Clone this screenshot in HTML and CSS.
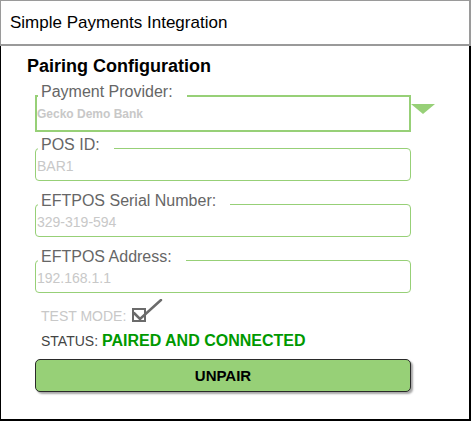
FILE: index.html
```html
<!DOCTYPE html>
<html lang="en">
<head>
<meta charset="utf-8">
<title>Simple Payments Integration</title>
<link rel="stylesheet" href="styles.css">
</head>
<body>
<div class="app">
  <header class="titlebar">Simple Payments Integration</header>
  <main class="panel">
    <h1 class="heading">Pairing Configuration</h1>
    <form class="form">
      <div class="select-row">
        <fieldset class="field field--select">
          <legend class="field-label">Payment Provider:</legend>
          <div class="field-value field-value--bold">Gecko Demo Bank</div>
        </fieldset>
        <span class="select-arrow"></span>
      </div>
      <fieldset class="field">
        <legend class="field-label">POS ID:</legend>
        <div class="field-value">BAR1</div>
      </fieldset>
      <fieldset class="field">
        <legend class="field-label">EFTPOS Serial Number:</legend>
        <div class="field-value">329-319-594</div>
      </fieldset>
      <fieldset class="field">
        <legend class="field-label">EFTPOS Address:</legend>
        <div class="field-value">192.168.1.1</div>
      </fieldset>
      <div class="test-row">
        <span class="test-label">TEST MODE:</span>
        <svg class="checkbox" width="32" height="24" viewBox="0 0 32 24" aria-hidden="true">
          <rect x="2" y="10" width="12" height="12" fill="none" stroke="#6b6b6b" stroke-width="2"/>
          <path d="M3 14 L9 20 L30 1" fill="none" stroke="#6b6b6b" stroke-width="2.5" stroke-linecap="round" stroke-linejoin="miter"/>
        </svg>
      </div>
      <div class="status-row">
        <span class="status-label">STATUS:</span> <strong class="status-value">PAIRED AND CONNECTED</strong>
      </div>
      <button type="button" class="unpair">UNPAIR</button>
    </form>
  </main>
</div>
</body>
</html>
```

FILE: styles.css
```css
* {
  box-sizing: border-box;
}

html,
body {
  margin: 0;
  background: #fff;
}

body {
  font-family: "Liberation Sans", Arial, Helvetica, sans-serif;
  color: #000;
}

.app {
  width: 471px;
  height: 421px;
  display: flex;
  flex-direction: column;
}

.titlebar {
  height: 46px;
  border: 1px solid #9a9a9a;
  border-right-width: 2px;
  border-bottom-width: 2px;
  padding: 12px 0 0 9px;
  font-size: 17px;
  line-height: 20px;
}

.panel {
  flex: 1;
  border-left: 1px solid #000;
  border-right: 2px solid #000;
  border-bottom: 2px solid #000;
  padding-top: 10px;
}

.heading {
  margin: 0 0 0 26px;
  font-size: 18px;
  line-height: 20px;
  font-weight: bold;
}

.form {
  margin: 8px 0 0 34px;
  display: flex;
  flex-direction: column;
  align-items: flex-start;
}

.select-row {
  display: flex;
  align-items: flex-start;
}

.field {
  width: 376px;
  min-width: 0;
  margin: 0;
  padding: 0 0 8px 1px;
  border: 1px solid #97d077;
  border-radius: 4px;
}

.field--select {
  border-width: 2px;
  border-radius: 0;
  padding: 0 0 9px 0;
}

.select-row + .field {
  margin-top: 5px;
}

.field + .field {
  margin-top: 12px;
}

.field-label {
  margin-left: 1px;
  padding: 0 14px 7px 3px;
  font-size: 16px;
  line-height: 16px;
  color: #666;
}

.field-value {
  font-size: 14px;
  line-height: 12px;
  color: #c8c8c8;
}

.field-value--bold {
  font-size: 12px;
  line-height: 14px;
  font-weight: bold;
}

.select-arrow {
  width: 0;
  height: 0;
  margin-top: 20px;
  border-left: 12px solid transparent;
  border-right: 12px solid transparent;
  border-top: 10px solid #97d077;
}

.test-row {
  display: flex;
  align-items: flex-end;
  gap: 5px;
  margin: 6px 0 0 6px;
}

.test-label {
  font-size: 14px;
  line-height: 16px;
  color: #c8c8c8;
}

.checkbox {
  display: block;
  margin-bottom: 1px;
}

.status-row {
  margin: 8px 0 0 6px;
  font-size: 14px;
  line-height: 18px;
  color: #444;
}

.status-value {
  font-size: 16px;
  color: #009900;
}

.unpair {
  margin-top: 9px;
  width: 376px;
  height: 33px;
  padding: 0;
  background: #97d077;
  border: 1px solid #2a2a2a;
  border-radius: 5px;
  box-shadow: 2px 2px 2px rgba(0, 0, 0, 0.35);
  font-family: inherit;
  font-size: 15px;
  font-weight: bold;
  color: #000;
}
```
